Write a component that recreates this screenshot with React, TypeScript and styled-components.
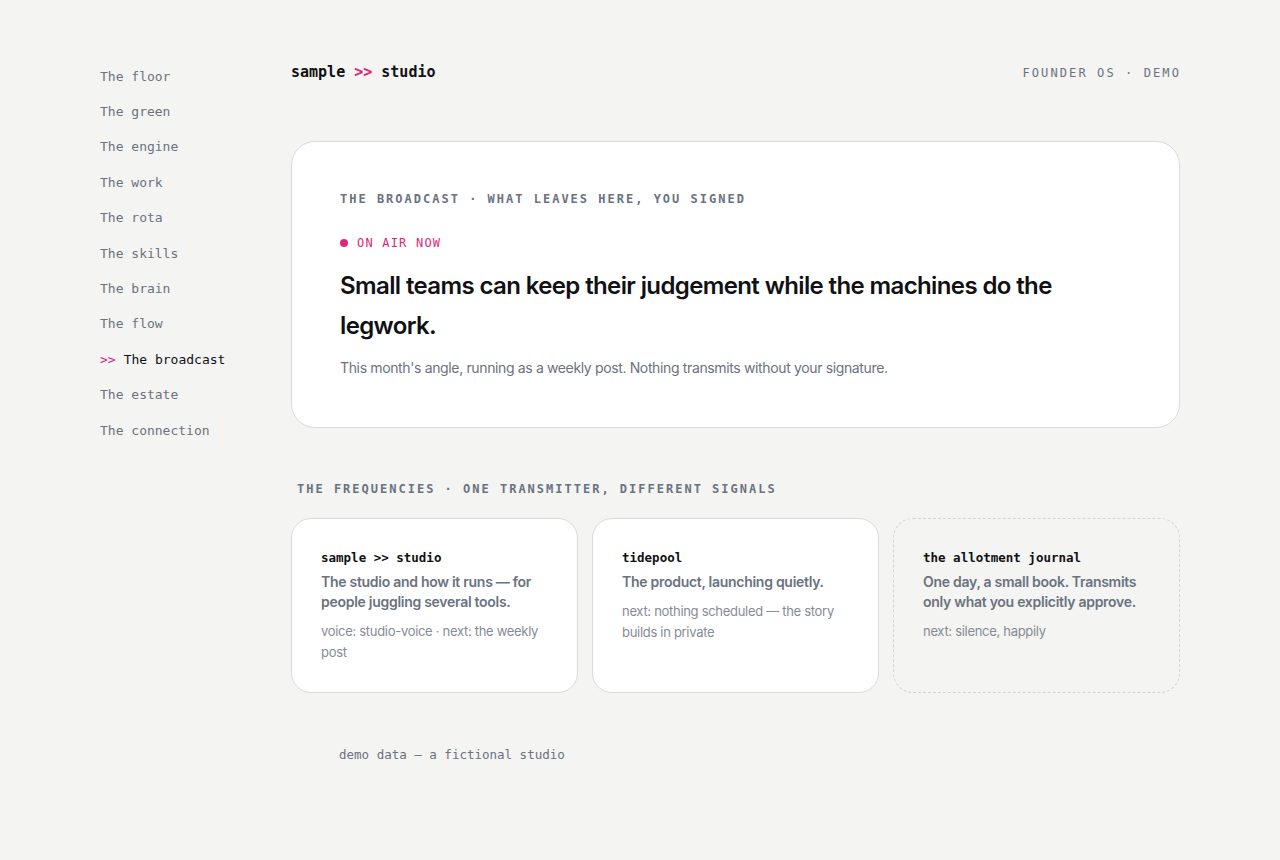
import React from "react";
import styled, { createGlobalStyle } from "styled-components";

const mono = `"DejaVu Sans Mono", "Liberation Mono", monospace`;
const sans = `Inter, "Noto Sans", "Liberation Sans", sans-serif`;

const GlobalStyle = createGlobalStyle`
  html, body {
    margin: 0;
    padding: 0;
    background: #f4f4f2;
  }
  body {
    font-family: ${sans};
    color: #111114;
    -webkit-font-smoothing: antialiased;
  }
  * { box-sizing: border-box; }
`;

const Shell = styled.div`
  display: grid;
  grid-template-columns: 191px 1fr;
  padding: 0 100px 80px 100px;
  min-height: 860px;
`;

const Sidebar = styled.nav`
  display: flex;
  flex-direction: column;
  padding-top: 58.5px;
`;

const NavItem = styled.a<{ $active?: boolean }>`
  font-family: ${mono};
  font-size: 13px;
  line-height: 19.4px;
  padding: 8px 0;
  color: ${(p) => (p.$active ? "#111114" : "#6b7280")};
  text-decoration: none;
  white-space: nowrap;
`;

const Arrow = styled.span`
  color: #db2777;
  margin-right: 8px;
`;

const Main = styled.main`
  display: flex;
  flex-direction: column;
  padding-top: 62px;
`;

const Header = styled.header`
  display: flex;
  justify-content: space-between;
  align-items: center;
  height: 20px;
  margin-bottom: 59px;
`;

const Brand = styled.div`
  font-family: ${mono};
  font-weight: 700;
  font-size: 15px;
  color: #111114;
`;

const BrandMark = styled.span`
  color: #db2777;
`;

const Tag = styled.div`
  font-family: ${mono};
  font-size: 12px;
  letter-spacing: 2.1px;
  color: #6b7280;
  margin-right: -1px;
  padding-top: 2px;
`;

const Hero = styled.section`
  background: #ffffff;
  border: 1px solid #d9dadf;
  border-radius: 24px;
  padding: 48px 48px 48px;
`;

const Kicker = styled.div`
  font-family: ${mono};
  font-weight: 700;
  font-size: 12px;
  line-height: 18px;
  letter-spacing: 2px;
  color: #6b7280;
`;

const OnAir = styled.div`
  display: flex;
  align-items: center;
  gap: 9px;
  margin-top: 26px;
  font-family: ${mono};
  font-size: 12px;
  line-height: 18px;
  letter-spacing: 1.2px;
  color: #db2777;
`;

const Dot = styled.span`
  width: 8px;
  height: 8px;
  border-radius: 50%;
  background: #db2777;
`;

const Headline = styled.h1`
  margin: 14px 0 0;
  font-family: ${sans};
  font-weight: 600;
  font-size: 24px;
  line-height: 40px;
  letter-spacing: -0.62px;
  color: #111114;
  max-width: 760px;
`;

const Lede = styled.p`
  margin: 11px 0 0;
  font-family: ${sans};
  font-size: 14px;
  line-height: 22px;
  letter-spacing: -0.36px;
  color: #6b7280;
`;

const SectionTitle = styled(Kicker)`
  margin-top: 52px;
  padding-left: 6px;
`;

const CardRow = styled.div`
  display: grid;
  grid-template-columns: repeat(3, 1fr);
  gap: 14px;
  margin-top: 20px;
`;

const Card = styled.article<{ $dashed?: boolean }>`
  background: ${(p) => (p.$dashed ? "transparent" : "#ffffff")};
  border: 1px ${(p) => (p.$dashed ? "dashed #d4d5da" : "solid #d9dadf")};
  border-radius: 20px;
  padding: 30px 29px 29px;
`;

const CardTitle = styled.div`
  font-family: ${mono};
  font-weight: 700;
  font-size: 12.5px;
  line-height: 18px;
  color: #111114;
`;

const CardDesc = styled.div`
  margin-top: 5px;
  font-family: ${sans};
  font-weight: 600;
  font-size: 14px;
  line-height: 20px;
  letter-spacing: -0.28px;
  color: #6b7280;
`;

const CardMeta = styled.div`
  margin-top: 8.5px;
  font-family: ${sans};
  font-size: 13px;
  line-height: 21px;
  letter-spacing: -0.3px;
  color: #868b95;
`;

const Footer = styled.footer`
  margin-top: 53px;
  padding-left: 48px;
  font-family: ${mono};
  font-size: 12.5px;
  line-height: 18px;
  color: #6b7280;
`;

const navItems = [
  "The floor",
  "The green",
  "The engine",
  "The work",
  "The rota",
  "The skills",
  "The brain",
  "The flow",
  "The broadcast",
  "The estate",
  "The connection",
];

const frequencies = [
  {
    title: "sample >> studio",
    desc: "The studio and how it runs — for people juggling several tools.",
    meta: "voice: studio-voice · next: the weekly post",
  },
  {
    title: "tidepool",
    desc: "The product, launching quietly.",
    meta: "next: nothing scheduled — the story builds in private",
  },
  {
    title: "the allotment journal",
    desc: "One day, a small book. Transmits only what you explicitly approve.",
    meta: "next: silence, happily",
    dashed: true,
  },
];

export default function App() {
  const active = "The broadcast";
  return (
    <>
      <GlobalStyle />
      <Shell>
        <Sidebar>
          {navItems.map((item) => (
            <NavItem key={item} $active={item === active}>
              {item === active && <Arrow>&gt;&gt;</Arrow>}
              {item}
            </NavItem>
          ))}
        </Sidebar>
        <Main>
          <Header>
            <Brand>
              sample <BrandMark>&gt;&gt;</BrandMark> studio
            </Brand>
            <Tag>FOUNDER OS · DEMO</Tag>
          </Header>

          <Hero>
            <Kicker>THE BROADCAST · WHAT LEAVES HERE, YOU SIGNED</Kicker>
            <OnAir>
              <Dot />
              ON AIR NOW
            </OnAir>
            <Headline>
              Small teams can keep their judgement while the machines do the legwork.
            </Headline>
            <Lede>
              This month's angle, running as a weekly post. Nothing transmits without your
              signature.
            </Lede>
          </Hero>

          <SectionTitle>THE FREQUENCIES · ONE TRANSMITTER, DIFFERENT SIGNALS</SectionTitle>
          <CardRow>
            {frequencies.map((f) => (
              <Card key={f.title} $dashed={f.dashed}>
                <CardTitle>{f.title}</CardTitle>
                <CardDesc>{f.desc}</CardDesc>
                <CardMeta>{f.meta}</CardMeta>
              </Card>
            ))}
          </CardRow>

          <Footer>demo data — a fictional studio</Footer>
        </Main>
      </Shell>
    </>
  );
}
